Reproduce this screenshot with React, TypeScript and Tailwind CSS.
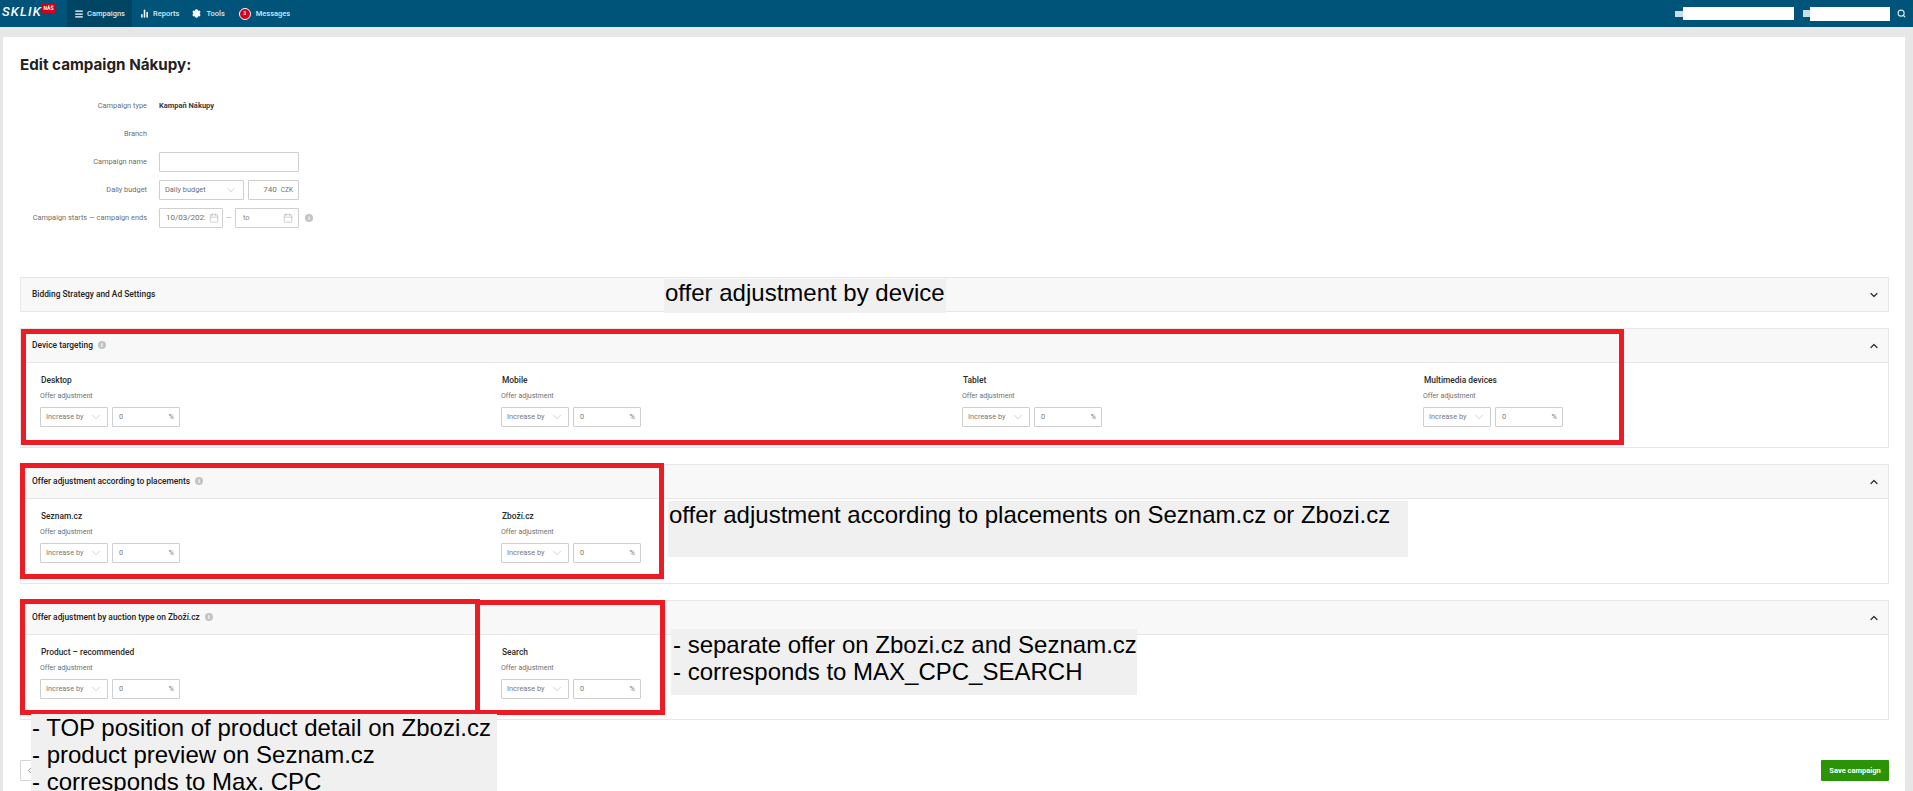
import { BarChart2, Calendar, ChevronDown, ChevronLeft, ChevronUp, Menu, Search, Settings } from 'lucide-react';

const adjustmentSections = [
  {
    title: 'Device targeting',
    columns: ['Desktop', 'Mobile', 'Tablet', 'Multimedia devices'],
  },
  {
    title: 'Offer adjustment according to placements',
    columns: ['Seznam.cz', 'Zboží.cz'],
  },
  {
    title: 'Offer adjustment by auction type on Zboží.cz',
    columns: ['Product – recommended', 'Search'],
  },
];

function InfoDot({ className = '' }: { className?: string }) {
  return (
    <span
      className={`inline-flex h-[8px] w-[8px] items-center justify-center rounded-full bg-[#c4c4c4] text-[6px] font-bold leading-none text-white ${className}`}
    >
      i
    </span>
  );
}

function TopBar() {
  return (
    <header className="flex h-[27px] items-center bg-[#00547a] text-[7.5px] font-medium text-[#d5e8f0]">
      <div className="relative h-[27px] w-[67px] shrink-0">
        <span className="absolute left-[2px] top-[5px] text-[13px] font-medium italic leading-[13px] tracking-[1.2px] text-white">
          SKLIK
        </span>
        <span className="absolute left-[42px] top-[4px] flex h-[9px] w-[13px] items-center justify-center bg-[#d4001a] text-[5px] font-bold leading-none text-white">
          NÁŠ
        </span>
      </div>
      <nav className="flex h-full items-center">
        <div className="flex h-full w-[65px] items-center gap-[3px] bg-[#004664] pl-[7px]">
          <Menu className="h-[10px] w-[10px] text-white" strokeWidth={3} />
          <span>Campaigns</span>
        </div>
        <div className="ml-[8px] flex items-center gap-[4px]">
          <BarChart2 className="h-[9px] w-[9px] text-white" strokeWidth={4} />
          <span>Reports</span>
        </div>
        <div className="ml-[13px] flex items-center gap-[5px]">
          <Settings className="h-[9px] w-[9px] fill-white text-white" strokeWidth={3} />
          <span>Tools</span>
        </div>
        <div className="ml-[14px] flex items-center gap-[5px]">
          <span className="flex h-[12px] w-[12px] items-center justify-center rounded-full border border-white bg-[#d4001a] text-[5px] leading-none text-white">
            3
          </span>
          <span>Messages</span>
        </div>
      </nav>
      <div className="ml-auto flex items-center pr-[7px]">
        <span className="h-[6px] w-[8px] bg-[#c9dde6]" />
        <span className="h-[13px] w-[111px] bg-white" />
        <span className="ml-[9px] h-[7px] w-[7px] bg-[#c9dde6]" />
        <span className="h-[14px] w-[80px] bg-white" />
        <Search className="ml-[7px] h-[9px] w-[9px] text-[#d5e8f0]" strokeWidth={3} />
      </div>
    </header>
  );
}

function FormRow({ label, children }: { label: string; children?: React.ReactNode }) {
  return (
    <div className="flex h-[20px] items-center">
      <div className="w-[127px] shrink-0 whitespace-nowrap text-right text-[#6f6f6f]">{label}</div>
      <div className="ml-[12px] flex items-center">{children}</div>
    </div>
  );
}

function CampaignForm() {
  return (
    <div className="mt-[21px] flex flex-col gap-[8px] text-[7.4px]">
      <FormRow label="Campaign type">
        <span className="text-[7.5px] font-bold text-[#3a3a3a]">Kampaň Nákupy</span>
      </FormRow>
      <FormRow label="Branch" />
      <FormRow label="Campaign name">
        <div className="h-[20px] w-[140px] rounded-[1px] border border-[#cfcfcf]" />
      </FormRow>
      <FormRow label="Daily budget">
        <div className="flex h-[20px] w-[85px] items-center justify-between rounded-[1px] border border-[#cfcfcf] pl-[5px] pr-[5px] text-[#6f6f6f]">
          <span>Daily budget</span>
          <ChevronDown className="h-[14px] w-[14px] text-[#b5b5b5]" strokeWidth={1} />
        </div>
        <div className="ml-[4px] flex h-[20px] w-[51px] items-center justify-end rounded-[1px] border border-[#cfcfcf] pr-[5px] text-[#6f6f6f]">
          <span className="text-[8px]">740</span>
          <span className="ml-[4px] mt-[1px] text-[6.5px]">CZK</span>
        </div>
      </FormRow>
      <FormRow label="Campaign starts — campaign ends">
        <div className="flex h-[20px] w-[64px] items-center rounded-[1px] border border-[#cfcfcf] pl-[6px] text-[#6f6f6f]">
          <span className="w-[39px] shrink-0 overflow-hidden whitespace-nowrap text-[8px]">10/03/2022</span>
          <Calendar className="ml-[4px] h-[10px] w-[10px] text-[#b5b5b5]" strokeWidth={1.5} />
        </div>
        <span className="ml-[3px] mr-[1px] w-[8px] text-[#b5b5b5]">—</span>
        <div className="flex h-[20px] w-[64px] items-center justify-between rounded-[1px] border border-[#cfcfcf] pl-[7px] pr-[5px] text-[#8a8a8a]">
          <span>to</span>
          <Calendar className="h-[10px] w-[10px] text-[#b5b5b5]" strokeWidth={1.5} />
        </div>
        <InfoDot className="ml-[6px]" />
      </FormRow>
    </div>
  );
}

function AdjustmentColumn({ title }: { title: string }) {
  return (
    <div>
      <div className="pl-[1px] text-[8.4px] font-medium leading-[10px] text-[#2a2a2a]">{title}</div>
      <div className="mt-[7px] text-[7px] leading-[8px] text-[#6f6f6f]">Offer adjustment</div>
      <div className="mt-[7px] flex gap-[4px] text-[7.4px] text-[#7a7a7a]">
        <div className="flex h-[20px] w-[68px] items-center justify-between rounded-[1px] border border-[#cfcfcf] pl-[5px] pr-[4px]">
          <span>Increase by</span>
          <ChevronDown className="h-[14px] w-[14px] text-[#b5b5b5]" strokeWidth={1} />
        </div>
        <div className="flex h-[20px] w-[68px] items-center justify-between rounded-[1px] border border-[#cfcfcf] pl-[6px] pr-[5px]">
          <span>0</span>
          <span>%</span>
        </div>
      </div>
    </div>
  );
}

function SectionHeader({ title, open, height }: { title: string; open: boolean; height: string }) {
  return (
    <div className={`flex items-center justify-between bg-[#f8f8f8] pl-[11px] pr-[8px] ${height}`}>
      <div className="flex items-center gap-[5px] text-[8.4px] font-medium text-[#222222]">
        <span>{title}</span>
        {open && <InfoDot />}
      </div>
      {open ? (
        <ChevronUp className="h-[12px] w-[12px] text-[#333333]" strokeWidth={2.5} />
      ) : (
        <ChevronDown className="h-[12px] w-[12px] text-[#333333]" strokeWidth={2.5} />
      )}
    </div>
  );
}

function Annotation({ className, lines }: { className: string; lines: string[] }) {
  return (
    <div className={`absolute overflow-hidden bg-[#f0f0f0] font-['Liberation_Sans',sans-serif] text-[24px] leading-[27px] text-black ${className}`}>
      {lines.map((line) => (
        <div key={line} className="whitespace-nowrap">
          {line}
        </div>
      ))}
    </div>
  );
}

export default function App() {
  return (
    <div className="relative h-[791px] overflow-hidden bg-[#e7e7e7] font-['Roboto',sans-serif]">
      <TopBar />
      <main className="ml-[3px] mr-[8px] mt-[10px] h-[754px] bg-white pl-[17px] pt-[18px]">
        <h1 className="font-['Inter',sans-serif] text-[15.2px] font-bold leading-[20px] text-[#222222]">
          Edit campaign Nákupy:
        </h1>
        <CampaignForm />

        <div className="mt-[49px] w-[1869px] border border-[#e7e7e7]">
          <SectionHeader title="Bidding Strategy and Ad Settings" open={false} height="h-[33px]" />
        </div>

        <div className="mt-[16px] flex w-[1869px] flex-col gap-[16px]">
          {adjustmentSections.map((section) => (
            <section key={section.title} className="h-[120px] border border-[#e7e7e7]">
              <div className="border-b border-[#e7e7e7]">
                <SectionHeader title={section.title} open height="h-[33px]" />
              </div>
              <div className="grid grid-cols-[repeat(4,461px)] pl-[19px] pt-[12px]">
                {section.columns.map((column) => (
                  <AdjustmentColumn key={column} title={column} />
                ))}
              </div>
            </section>
          ))}
        </div>

        <div className="mt-[40px] flex w-[1869px] items-center justify-between">
          <button className="flex h-[21px] w-[18px] items-center justify-center rounded-[1px] border border-[#d5d5d5] text-[#777777]">
            <ChevronLeft className="h-[9px] w-[9px]" />
          </button>
          <button className="h-[21px] w-[68px] rounded-[1px] bg-[#2b9306] text-[7.5px] font-bold text-white">
            Save campaign
          </button>
        </div>
      </main>

      <div className="absolute left-[21px] top-[329px] h-[116px] w-[1603px] border-[5px] border-[#ed1c24]" />
      <div className="absolute left-[20px] top-[463px] h-[116px] w-[644px] border-[5px] border-[#ed1c24]" />
      <div className="absolute left-[20px] top-[599px] h-[116px] w-[460px] border-[5px] border-[#ed1c24]" />
      <div className="absolute left-[480px] top-[600px] h-[115px] w-[185px] border-[5px] border-l-0 border-[#ed1c24]" />

      <Annotation className="left-[664px] top-[279px] h-[34px] w-[282px] pl-[1px]" lines={['offer adjustment by device']} />
      <Annotation
        className="left-[668px] top-[501px] h-[56px] w-[740px] pl-[1px]"
        lines={['offer adjustment according to placements on Seznam.cz or Zbozi.cz']}
      />
      <Annotation
        className="left-[671px] top-[629px] h-[66px] w-[466px] pl-[2px] pt-[2px]"
        lines={['- separate offer on Zbozi.cz and Seznam.cz', '- corresponds to MAX_CPC_SEARCH']}
      />
      <Annotation
        className="left-[31px] top-[714px] h-[77px] w-[466px] pl-[1px]"
        lines={['- TOP position of product detail on Zbozi.cz', '- product preview on Seznam.cz', '- corresponds to Max. CPC']}
      />
    </div>
  );
}
